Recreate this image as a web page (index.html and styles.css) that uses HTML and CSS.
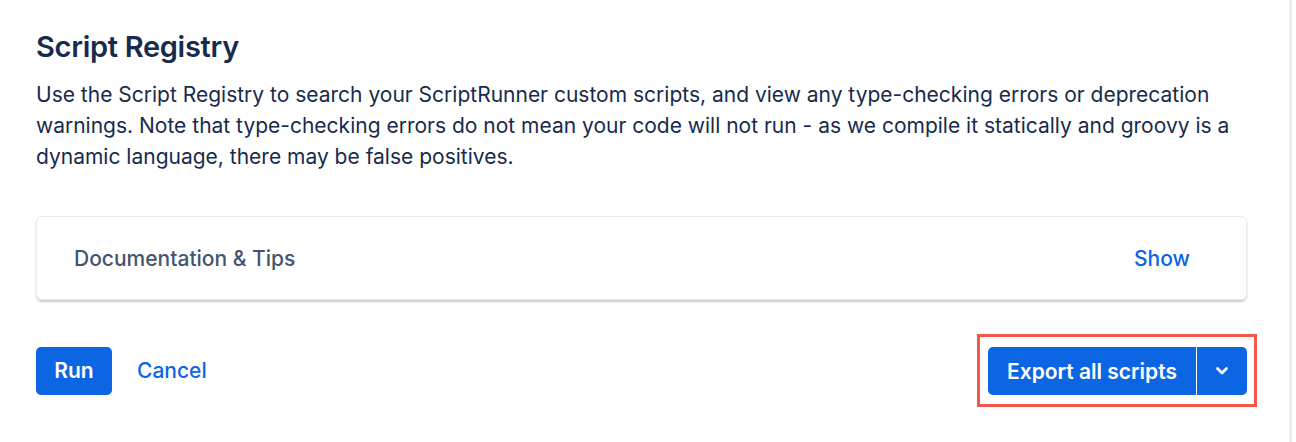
FILE: index.html
```html
<!DOCTYPE html>
<html lang="en">
<head>
    <meta charset="UTF-8">
    <meta name="viewport" content="width=device-width, initial-scale=1.0">
    <title>Script Registry</title>
    <link rel="stylesheet" href="styles.css">
</head>
<body>

    <div class="sr-page">
        <div class="sr-content">

            <!-- Header and intro text -->
            <h1 class="sr-title">Script Registry</h1>
            <p class="sr-intro">
                Use the Script Registry to search your ScriptRunner custom scripts, and view any type-checking errors or deprecation
                warnings. Note that type-checking errors do not mean your code will not run - as we compile it statically and groovy is a
                dynamic language, there may be false positives.
            </p>

            <!-- Collapsible docs panel -->
            <div class="sr-panel">
                <span class="sr-panel-title">Documentation &amp; Tips</span>
                <button class="sr-link sr-show">Show</button>
            </div>

            <!-- Form actions -->
            <div class="sr-actions">
                <div class="sr-actions-left">
                    <button class="sr-btn sr-btn-primary sr-run">Run</button>
                    <button class="sr-link sr-cancel">Cancel</button>
                </div>

                <div class="sr-highlight">
                    <div class="sr-split">
                        <button class="sr-btn sr-btn-primary sr-split-main">Export all scripts</button>
                        <button class="sr-btn sr-btn-primary sr-split-toggle" aria-label="More">
                            <svg width="14" height="10" viewBox="0 0 14 10">
                                <path d="M2.5 2.5 L7 7 L11.5 2.5" fill="none" stroke="#fff" stroke-width="2.8" stroke-linecap="round" stroke-linejoin="round"/>
                            </svg>
                        </button>
                    </div>
                </div>
            </div>

        </div>
    </div>

</body>
</html>
```

FILE: styles.css
```css
body {
    margin: 0;
    background: #fff;
    font-family: Inter, 'Noto Sans', sans-serif;
    color: #172B4D;
}

.sr-page {
    width: 1289px;
    height: 442px;
    border-right: 3px solid #ececec;
}

.sr-content {
    width: 1211px;
    margin-left: 36px;
    padding-top: 27px;
}

.sr-title {
    margin: 0;
    font-size: 29px;
    line-height: 40px;
    font-weight: 600;
    letter-spacing: -0.3px;
    color: #172B4D;
}

.sr-intro {
    margin: 12px 0 0 0;
    font-size: 21px;
    line-height: 31px;
    color: #172B4D;
}

.sr-panel {
    margin-top: 44px;
    height: 84px;
    box-sizing: border-box;
    display: flex;
    align-items: center;
    justify-content: space-between;
    padding: 0 42px 0 37px;
    border: 1px solid #e9eaec;
    border-radius: 6px;
    box-shadow: 0 2px 2px rgba(9, 30, 66, 0.22);
}

.sr-panel-title {
    font-size: 21px;
    font-weight: 500;
    color: #44546F;
}

.sr-link {
    background: none;
    border: none;
    padding: 0 15px;
    font-family: Inter, 'Noto Sans', sans-serif;
    font-size: 21px;
    font-weight: 500;
    color: #0C66E4;
    cursor: pointer;
}

.sr-show {
    padding-right: 14px;
}

.sr-actions {
    margin-top: 34px;
    display: flex;
    align-items: center;
    justify-content: space-between;
}

.sr-actions-left {
    display: flex;
    align-items: center;
    gap: 10px;
}

.sr-btn {
    height: 48px;
    border: none;
    border-radius: 5px;
    font-family: Inter, 'Noto Sans', sans-serif;
    font-size: 21px;
    font-weight: 600;
    cursor: pointer;
}

.sr-btn-primary {
    background: #0C66E4;
    color: #fff;
}

.sr-run {
    width: 76px;
}

.sr-highlight {
    margin-right: -10px;
    padding: 10px 7px 9px 8px;
    border: 3px solid #F5574B;
}

.sr-split {
    display: flex;
    gap: 1px;
}

.sr-split-main {
    width: 208px;
    padding: 0;
    border-radius: 5px 0 0 5px;
}

.sr-split-toggle {
    width: 50px;
    padding: 0;
    border-radius: 0 5px 5px 0;
    display: flex;
    align-items: center;
    justify-content: center;
}
```
